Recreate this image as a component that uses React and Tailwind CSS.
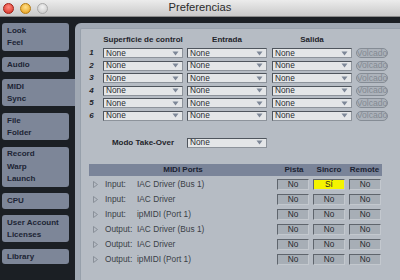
import React from "react";

const tabs = [
  { lines: ["Look", "Feel"], h: "h-[28px]", mt: "mt-[6px]" },
  { lines: ["Audio"], h: "h-[15px]", mt: "mt-[6px]" },
  { lines: ["MIDI", "Sync"], h: "h-[27px]", mt: "mt-[7px]", active: true },
  { lines: ["File", "Folder"], h: "h-[27px]", mt: "mt-[7px]" },
  { lines: ["Record", "Warp", "Launch"], h: "h-[40px]", mt: "mt-[7px]" },
  { lines: ["CPU"], h: "h-[16px]", mt: "mt-[6px]" },
  { lines: ["User Account", "Licenses"], h: "h-[27px]", mt: "mt-[6px]" },
  { lines: ["Library"], h: "h-[15px]", mt: "mt-[7px]" },
];

const ports = [
  { dir: "Input:", name: "IAC Driver (Bus 1)", sync: true },
  { dir: "Input:", name: "IAC Driver" },
  { dir: "Input:", name: "ipMIDI (Port 1)" },
  { dir: "Output:", name: "IAC Driver (Bus 1)" },
  { dir: "Output:", name: "IAC Driver" },
  { dir: "Output:", name: "ipMIDI (Port 1)" },
];

const Arrow = () => (
  <svg width="7" height="5" viewBox="0 0 7 5" className="shrink-0">
    <path d="M0.5 0.5 L6.5 0.5 L3.5 4.5 Z" fill="#7d8797" />
  </svg>
);

const Dropdown = ({ className = "" }) => (
  <div
    className={`h-[10px] w-[80px] flex items-center justify-between bg-[#e4e6e8] border border-[#4f555d] border-b-[#8d939b] border-r-[#8d939b] pl-[2px] pr-[3px] ${className}`}
  >
    <span className="text-[8.3px] leading-none text-[#2a2d31]">None</span>
    <Arrow />
  </div>
);

const Toggle = ({ on }) => (
  <div
    className={`h-[11px] w-[32px] flex items-center justify-center border border-[#5f656d] border-b-[#c3c8ce] border-r-[#c3c8ce] text-[8.3px] leading-none ${
      on ? "bg-[#f4f400] text-[#222]" : "bg-[#a7aeb6] text-[#26292d]"
    }`}
  >
    {on ? "Sí" : "No"}
  </div>
);

const App = () => {
  return (
    <div
      className="w-[400px] h-[280px] overflow-hidden flex flex-col bg-[#1b1f24]"
      style={{ fontFamily: '"Liberation Sans", Arial, sans-serif' }}
    >
      <div className="h-[17px] shrink-0 relative flex items-center justify-center bg-gradient-to-b from-[#ececec] to-[#c9c9c9] border-b border-[#8a8a8a]">
        <div className="absolute left-[3px] top-[3px] flex gap-[6px]">
          <span className="w-[11px] h-[11px] rounded-full bg-[radial-gradient(circle_at_50%_35%,#ff8a80,#d42a1c)] border border-[#a02018]" />
          <span className="w-[11px] h-[11px] rounded-full bg-[radial-gradient(circle_at_50%_35%,#ffe08a,#e59a12)] border border-[#b57a10]" />
          <span className="w-[11px] h-[11px] rounded-full bg-[radial-gradient(circle_at_50%_35%,#f2f2f2,#c4c4c4)] border border-[#a8a8a8]" />
        </div>
        <span className="text-[11.2px] leading-none text-[#2a2a2a]">Preferencias</span>
      </div>

      <div className="flex flex-1 min-h-0">
        <div className="w-[75px] shrink-0 flex flex-col pl-[2px]">
          {tabs.map((t, i) => (
            <div
              key={i}
              className={`${t.h} ${t.mt} ${
                t.active ? "w-[73px] rounded-l-[3px]" : "w-[67px] rounded-[3px]"
              } bg-[#7d8698] pl-[5px] flex flex-col justify-center`}
            >
              {t.lines.map((l) => (
                <span
                  key={l}
                  className={`${t.lines.length === 3 ? "leading-[12.5px]" : "leading-[12px]"} text-[8px] font-bold text-[#1c2434] whitespace-nowrap`}
                >
                  {l}
                </span>
              ))}
            </div>
          ))}
        </div>

        <div className="flex-1 mt-[6px] rounded-tl-[6px] bg-[#a0a8b3] pt-[5px] pl-[5px]">
          <div className="h-full bg-[#b6bcc4] border-l border-t border-[#97a0ab] rounded-tl-[2px]">
            <div className="flex pt-[7px] h-[19px]">
              <div className="w-[22px]" />
              <span className="w-[80px] text-center text-[8px] font-bold text-[#1f242b] leading-none">
                Superficie de control
              </span>
              <span className="ml-[4px] w-[80px] text-center text-[8px] font-bold text-[#1f242b] leading-none">
                Entrada
              </span>
              <span className="ml-[5px] w-[80px] text-center text-[8px] font-bold text-[#1f242b] leading-none">
                Salida
              </span>
            </div>

            <div className="flex flex-col gap-[2.5px]">
              {[1, 2, 3, 4, 5, 6].map((n) => (
                <div key={n} className="flex items-center h-[10px]">
                  <span className="ml-[5px] w-[11px] text-center text-[8px] font-bold italic text-[#1f242b] leading-none">
                    {n}
                  </span>
                  <Dropdown className="ml-[6px]" />
                  <Dropdown className="ml-[4px]" />
                  <Dropdown className="ml-[5px]" />
                  <div className="ml-[4px] w-[32px] h-[10px] rounded-full border border-[#858c95] bg-[#adb3bb] overflow-hidden flex items-center justify-center">
                    <span className="text-[8.6px] leading-none text-[#838a93] whitespace-nowrap">
                      Volcado
                    </span>
                  </div>
                </div>
              ))}
            </div>

            <div className="flex items-center mt-[17px] h-[10px]">
              <span className="w-[93px] text-right text-[8px] font-bold text-[#1f242b] leading-none">
                Modo Take-Over
              </span>
              <Dropdown className="ml-[13px]" />
            </div>

            <div className="ml-[8px] w-[293px] mt-[16px]">
              <div className="h-[12px] flex items-center bg-[#7a8499] text-[8px] font-bold text-[#1b2232] leading-none">
                <span className="w-[188px] text-center">MIDI Ports</span>
                <span className="w-[34px] text-center">Pista</span>
                <span className="w-[36px] text-center">Sincro</span>
                <span className="w-[35px] text-center">Remote</span>
              </div>
              <div className="mt-[1px]">
                {ports.map((p, i) => (
                  <div key={i} className="h-[15px] flex items-center">
                    <svg width="5" height="7" viewBox="0 0 5 7" className="ml-[4px] shrink-0">
                      <path d="M0.5 0.5 L4.5 3.5 L0.5 6.5 Z" fill="none" stroke="#858b94" strokeWidth="0.9" />
                    </svg>
                    <span className="ml-[7px] w-[32px] text-[8.3px] leading-none text-[#3a3f46]">
                      {p.dir}
                    </span>
                    <span className="text-[8.3px] leading-none text-[#3a3f46] whitespace-nowrap">
                      {p.name}
                    </span>
                    <div className="ml-auto mr-[1px] flex gap-[4px]">
                      <Toggle />
                      <Toggle on={p.sync} />
                      <Toggle />
                    </div>
                  </div>
                ))}
              </div>
            </div>
          </div>
        </div>
      </div>
    </div>
  );
};

export default App;
